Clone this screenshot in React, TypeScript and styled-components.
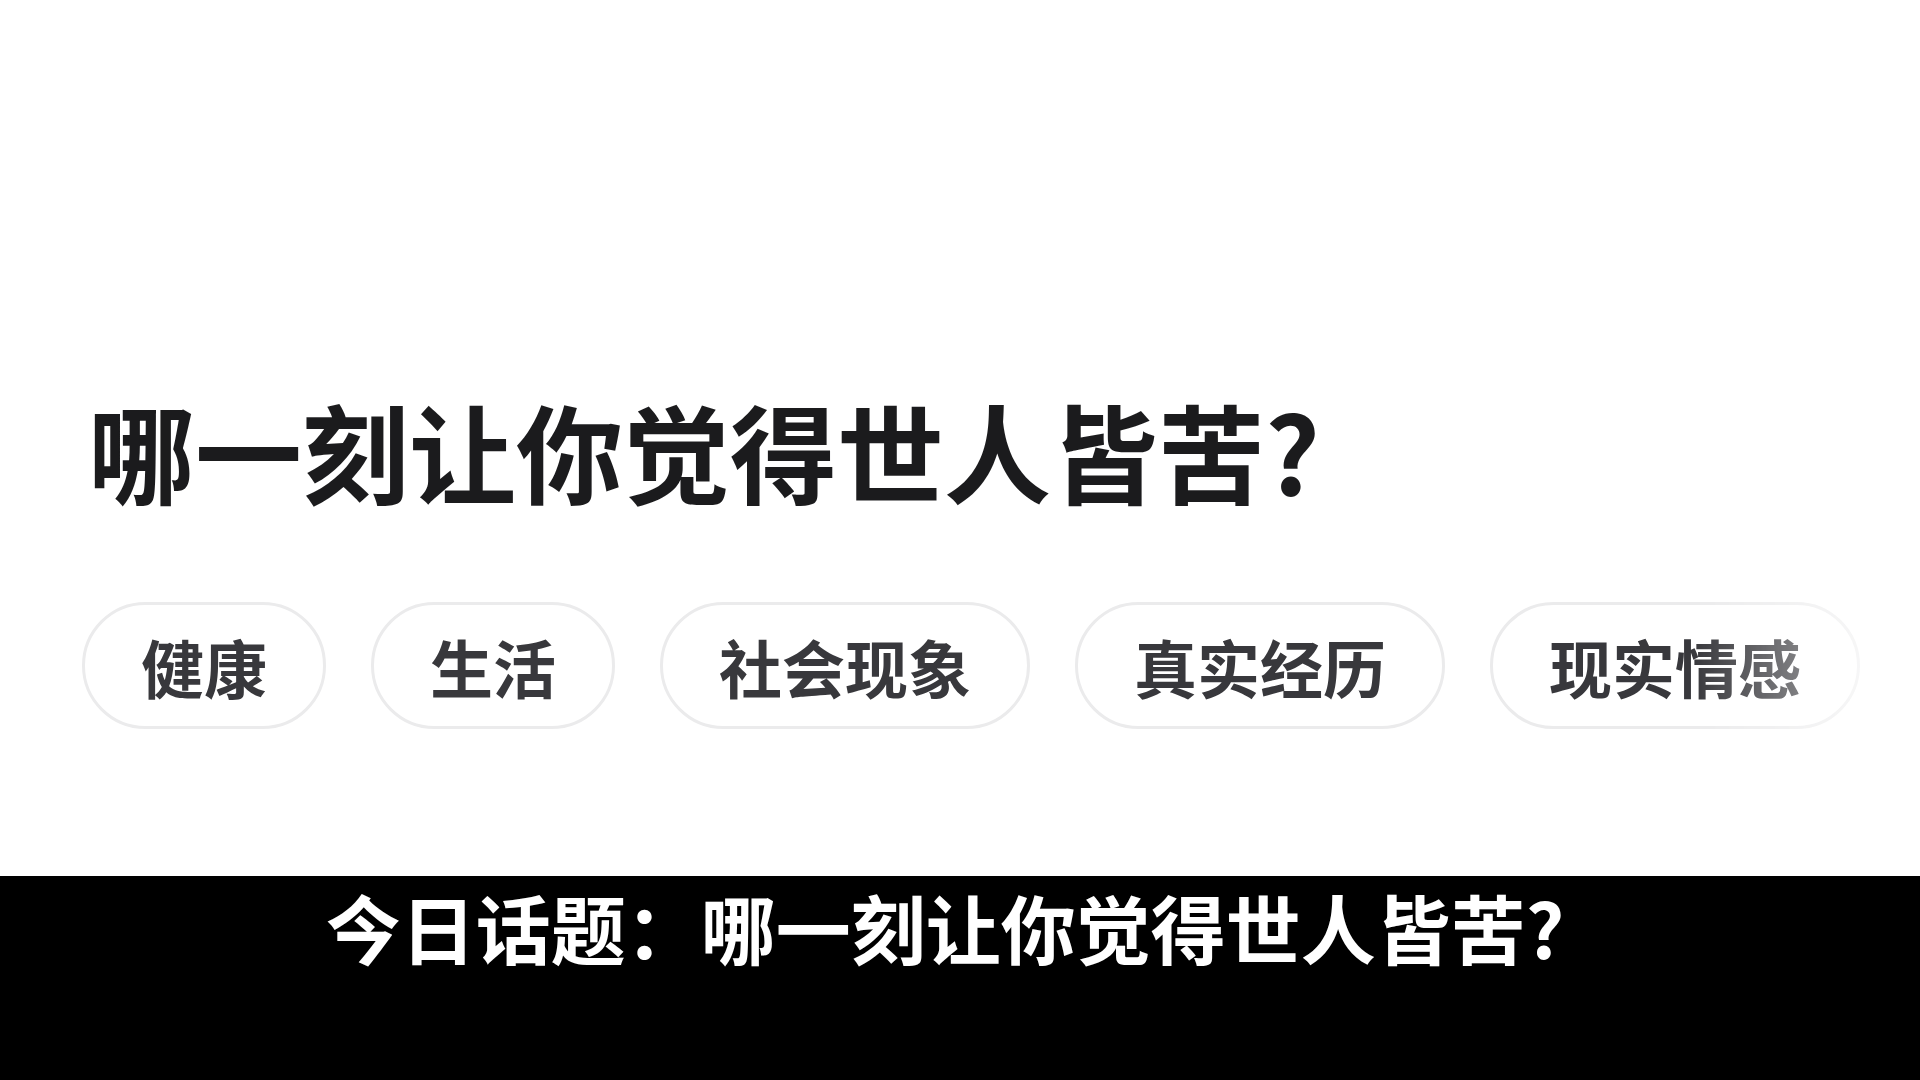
import React from 'react';
import styled, { createGlobalStyle } from 'styled-components';

const tags = ['健康', '生活', '社会现象', '真实经历', '现实情感'];

const GlobalStyle = createGlobalStyle`
  html, body {
    margin: 0;
    padding: 0;
    background: #ffffff;
  }
  body {
    font-family: "Noto Sans CJK SC", "Noto Sans", sans-serif;
  }
`;

const Page = styled.div`
  width: 1920px;
  height: 1080px;
  display: flex;
  flex-direction: column;
  overflow: hidden;
`;

const Content = styled.main`
  flex: 1;
  display: flex;
  flex-direction: column;
  padding: 386px 0 0 82px;
  background: #ffffff;
`;

const Title = styled.h1`
  margin: 0 0 89px 6px;
  font-size: 107px;
  line-height: 127px;
  font-weight: 700;
  color: #1b1b1d;
`;

// the last tag fades out towards the right edge of the screen
const TagRow = styled.div`
  display: flex;
  gap: 45px;
  -webkit-mask-image: linear-gradient(to right, #000 0, #000 1610px, rgba(0, 0, 0, 0.4) 1790px, rgba(0, 0, 0, 0.3) 1840px);
  mask-image: linear-gradient(to right, #000 0, #000 1610px, rgba(0, 0, 0, 0.4) 1790px, rgba(0, 0, 0, 0.3) 1840px);
`;

const Tag = styled.div`
  height: 127px;
  box-sizing: border-box;
  padding: 0 56px;
  display: flex;
  align-items: center;
  border: 3px solid #ebebec;
  border-radius: 64px;
  font-size: 63px;
  font-weight: 700;
  color: #38383c;
  white-space: nowrap;
`;

const Caption = styled.footer`
  height: 204px;
  background: #000000;
  display: flex;
  justify-content: center;
  padding: 5px 30px 0 0;
  box-sizing: border-box;
`;

const CaptionText = styled.div`
  font-size: 75px;
  line-height: 92px;
  font-weight: 700;
  color: #ffffff;
`;

export default function App() {
  return (
    <Page>
      <GlobalStyle />
      <Content>
        <Title>哪一刻让你觉得世人皆苦?</Title>
        <TagRow>
          {tags.map((t) => (
            <Tag key={t}>{t}</Tag>
          ))}
        </TagRow>
      </Content>
      <Caption>
        <CaptionText>今日话题：哪一刻让你觉得世人皆苦?</CaptionText>
      </Caption>
    </Page>
  );
}
